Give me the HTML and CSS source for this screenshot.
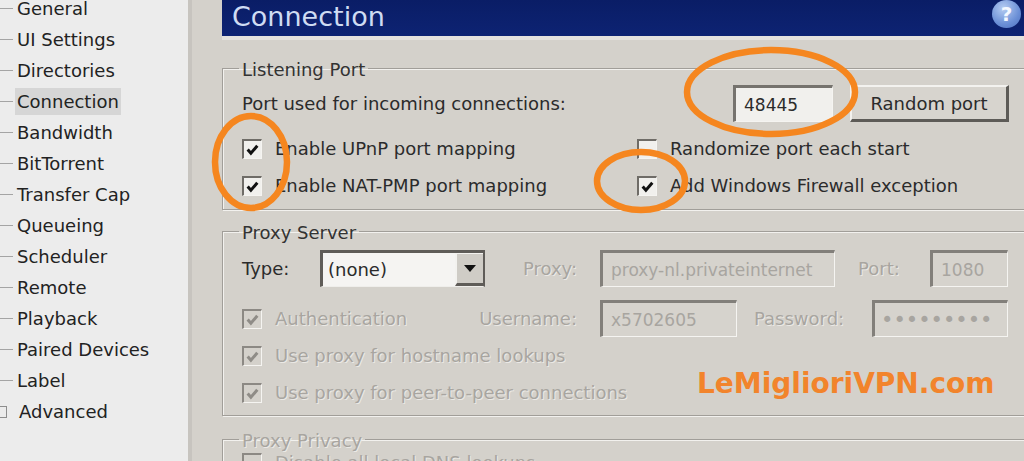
FILE: index.html
```html
<!DOCTYPE html>
<html lang="en">
<head>
<meta charset="utf-8">
<title>Preferences - Connection</title>
<link rel="stylesheet" href="styles.css">
</head>
<body>
<div class="app">
  <nav class="sidebar">
    <ul class="tree">
      <li><span class="item">General</span></li>
      <li><span class="item">UI Settings</span></li>
      <li><span class="item">Directories</span></li>
      <li class="selected"><span class="item">Connection</span></li>
      <li><span class="item">Bandwidth</span></li>
      <li><span class="item">BitTorrent</span></li>
      <li><span class="item">Transfer Cap</span></li>
      <li><span class="item">Queueing</span></li>
      <li><span class="item">Scheduler</span></li>
      <li><span class="item">Remote</span></li>
      <li><span class="item">Playback</span></li>
      <li><span class="item">Paired Devices</span></li>
      <li><span class="item">Label</span></li>
      <li class="expandable"><span class="item">Advanced</span></li>
    </ul>
  </nav>
  <main class="panel">
    <header class="title-bar">
      <h1 class="title">Connection</h1>
      <span class="help">?</span>
    </header>

    <fieldset class="group listening">
      <legend>Listening Port</legend>
      <div class="port-row">
        <span class="port-label">Port used for incoming connections:</span>
        <span class="field port-field">48445</span>
        <span class="button">Random port</span>
      </div>
      <div class="check-grid">
        <div class="check"><span class="box checked"><svg viewBox="0 0 14 14"><polyline points="2.5,7 5.5,10.5 11.5,3.5"/></svg></span>Enable UPnP port mapping</div>
        <div class="check"><span class="box"></span>Randomize port each start</div>
        <div class="check"><span class="box checked"><svg viewBox="0 0 14 14"><polyline points="2.5,7 5.5,10.5 11.5,3.5"/></svg></span>Enable NAT-PMP port mapping</div>
        <div class="check"><span class="box checked"><svg viewBox="0 0 14 14"><polyline points="2.5,7 5.5,10.5 11.5,3.5"/></svg></span>Add Windows Firewall exception</div>
      </div>
    </fieldset>

    <fieldset class="group proxy">
      <legend>Proxy Server</legend>
      <div class="proxy-row first">
        <span class="type-label">Type:</span>
        <span class="select"><span class="select-value">(none)</span><span class="select-arrow"></span></span>
        <span class="dim-label right proxy-label">Proxy:</span>
        <span class="field disabled host-field">proxy-nl.privateinternet</span>
        <span class="dim-label port-label2">Port:</span>
        <span class="field disabled small-port">1080</span>
      </div>
      <div class="proxy-row">
        <div class="check dim auth"><span class="box checked disabled"><svg viewBox="0 0 14 14"><polyline points="2.5,7 5.5,10.5 11.5,3.5"/></svg></span>Authentication</div>
        <span class="dim-label right user-label">Username:</span>
        <span class="field disabled user-field">x5702605</span>
        <span class="dim-label pass-label">Password:</span>
        <span class="field disabled pass-field">•••••••••</span>
      </div>
      <div class="proxy-row">
        <div class="check dim"><span class="box checked disabled"><svg viewBox="0 0 14 14"><polyline points="2.5,7 5.5,10.5 11.5,3.5"/></svg></span>Use proxy for hostname lookups</div>
      </div>
      <div class="proxy-row">
        <div class="check dim"><span class="box checked disabled"><svg viewBox="0 0 14 14"><polyline points="2.5,7 5.5,10.5 11.5,3.5"/></svg></span>Use proxy for peer-to-peer connections</div>
      </div>
    </fieldset>

    <fieldset class="group privacy">
      <legend class="dim">Proxy Privacy</legend>
      <div class="proxy-row privacy-row">
        <div class="check dim"><span class="box disabled"></span>Disable all local DNS lookups</div>
      </div>
    </fieldset>
  </main>
</div>

<svg class="annotations" viewBox="0 0 1024 461" width="1024" height="461">
  <ellipse cx="771" cy="92" rx="84" ry="42"/>
  <ellipse cx="251" cy="162" rx="36" ry="46"/>
  <ellipse cx="641" cy="181" rx="44" ry="29"/>
</svg>
<div class="watermark">LeMiglioriVPN.com</div>
</body>
</html>
```

FILE: styles.css
```css
* { box-sizing: border-box; }

html, body {
  margin: 0;
  padding: 0;
  width: 1024px;
  height: 461px;
  overflow: hidden;
  font-family: "DejaVu Sans", "Liberation Sans", sans-serif;
  font-size: 18px;
  color: #2b2b2b;
  background: #d4d1cb;
}

body { position: relative; }

.app {
  display: flex;
  width: 1024px;
  height: 461px;
}

/* ---------- sidebar tree ---------- */
.sidebar {
  width: 188px;
  flex: none;
  background: #ececec;
  overflow: hidden;
}

.tree {
  list-style: none;
  margin: -7px 0 0 0;
  padding: 0;
}

.tree li {
  display: flex;
  align-items: center;
  height: 31px;
  white-space: nowrap;
}

.tree li::before {
  content: "";
  flex: none;
  width: 13px;
  height: 1px;
  background: #a4a4a4;
  margin-right: 4px;
}

.tree li.expandable::before {
  width: 10px;
  height: 10px;
  margin-left: -5px;
  margin-right: 12px;
  background: transparent;
  border: 1px solid #8e8e8e;
}

.item {
  color: #222;
  padding: 3px 2px;
  margin-left: -2px;
}

.selected .item {
  background: #d6d6d6;
}

/* ---------- panel ---------- */
.panel {
  flex: 1;
  border-left: 4px solid #c7c4bf;
  overflow: hidden;
  background: #d4d1cb;
}

.title-bar {
  display: flex;
  align-items: center;
  justify-content: space-between;
  height: 36px;
  margin-left: 30px;
  padding: 0 3px 0 10px;
  background: linear-gradient(#0a1d66, #0d2373);
  border-bottom: 4px solid #e4e2de;
  box-sizing: content-box;
}

.title {
  margin: 0 0 3px 0;
  font-size: 27px;
  font-weight: normal;
  line-height: 33px;
  color: #cfdcf3;
}

.help {
  width: 29px;
  height: 28px;
  margin-top: -9px;
  border-radius: 50%;
  background: radial-gradient(circle at 40% 30%, #b6cdf2, #6b8fd6 60%, #4d70bf);
  color: #f4f8ff;
  font-weight: bold;
  font-size: 20px;
  line-height: 28px;
  text-align: center;
}

/* ---------- group boxes ---------- */
.group {
  margin: 17px -40px 0 30px;
  padding: 0 0 5px 19px;
  border: 1px solid #a19e99;
  box-shadow: inset 1px 1px 0 #f2f1ee, 1px 1px 0 #f2f1ee;
  min-width: 0;
}

.group legend {
  margin-left: -3px;
  padding: 3px 3px 0 3px;
  line-height: 19px;
  color: #333;
}

.proxy { margin-top: 10px; padding-bottom: 4px; }
.privacy { margin-top: 12px; }

.dim, .group legend.dim { color: #a8a5a0; text-shadow: 1px 1px 0 #ebe9e5; }

/* ---------- listening port ---------- */
.port-row {
  display: flex;
  align-items: center;
  height: 37px;
  margin-top: 6px;
}

.port-label { width: 491px; flex: none; }

.field {
  display: flex;
  align-items: center;
  height: 37px;
  padding: 0 8px;
  flex: none;
  background: #f1f0ed;
  border-top: 3px solid #76736e;
  border-left: 3px solid #76736e;
  border-right: 1px solid #f5f4f1;
  border-bottom: 1px solid #f5f4f1;
  font-size: 17px;
  white-space: nowrap;
  overflow: hidden;
  color: #2b2b2b;
}

.port-field { width: 100px; }

.button {
  width: 159px;
  height: 37px;
  margin-left: 17px;
  flex: none;
  display: flex;
  align-items: center;
  justify-content: center;
  background: #d7d4ce;
  border-top: 2px solid #f3f2ef;
  border-left: 2px solid #f3f2ef;
  border-right: 3px solid #5d5b57;
  border-bottom: 3px solid #5d5b57;
  color: #2b2b2b;
}

.check-grid {
  display: grid;
  grid-template-columns: 395px auto;
  grid-auto-rows: 37px;
  margin-top: 8px;
}

.check {
  display: flex;
  align-items: center;
  white-space: nowrap;
}

.box {
  width: 20px;
  height: 20px;
  flex: none;
  margin-right: 13px;
  background: #f1f0ed;
  border-top: 2px solid #6f6c67;
  border-left: 2px solid #6f6c67;
  border-right: 1px solid #f5f4f1;
  border-bottom: 1px solid #f5f4f1;
  display: flex;
  align-items: center;
  justify-content: center;
}

.box svg {
  width: 15px;
  height: 15px;
  fill: none;
  stroke: #111;
  stroke-width: 2.8;
}

.box.disabled {
  background: #d4d1cb;
  border-top-color: #8c8984;
  border-left-color: #8c8984;
}

.box.disabled svg { stroke: #8f8c87; }

/* ---------- proxy server ---------- */
.proxy-row {
  display: flex;
  align-items: center;
  height: 37px;
  white-space: nowrap;
}

.proxy-row.first { margin-top: 8px; margin-bottom: 13px; }

.type-label { width: 78px; flex: none; }

.select {
  width: 165px;
  height: 37px;
  flex: none;
  display: flex;
  background: #f5f4f2;
  border-top: 3px solid #5f5c58;
  border-left: 3px solid #5f5c58;
  border-right: 2px solid #5f5c58;
  border-bottom: 1px solid #efeeeb;
}

.select-value {
  flex: 1;
  padding-left: 5px;
  line-height: 33px;
}

.select-arrow {
  width: 28px;
  flex: none;
  background: #cfccc6;
  border-left: 2px solid #f3f2ef;
  border-top: 1px solid #f3f2ef;
  border-bottom: 3px solid #5f5c58;
  display: flex;
  align-items: center;
  justify-content: center;
}

.select-arrow::after {
  content: "";
  border-left: 6px solid transparent;
  border-right: 6px solid transparent;
  border-top: 7px solid #111;
}

.dim-label { color: #a8a5a0; text-shadow: 1px 1px 0 #ebe9e5; flex: none; }
.right { text-align: right; padding-right: 23px; }

.proxy-label { width: 115px; }
.port-label2 { width: 95px; padding-left: 23px; }
.user-label { width: 125px; }
.pass-label { width: 135px; padding-left: 17px; }

.field.disabled {
  background: #d6d3cd;
  color: #a8a5a0;
  border-top-color: #827f7a;
  border-left-color: #827f7a;
}

.host-field { width: 235px; }
.small-port { width: 78px; }
.user-field { width: 137px; }
.pass-field { width: 136px; color: #8d8a85; font-size: 21px; letter-spacing: 0; padding-left: 6px; }

.auth { width: 233px; flex: none; }

.privacy-row { margin-top: -6px; }

/* ---------- overlays ---------- */
.annotations {
  position: absolute;
  left: 0;
  top: 0;
  pointer-events: none;
}

.annotations ellipse {
  fill: none;
  stroke: #f5861f;
  stroke-width: 6.5;
}

.watermark {
  position: absolute;
  left: 697px;
  top: 367px;
  font-family: "DejaVu Sans", sans-serif;
  font-weight: bold;
  font-size: 28px;
  color: #f2842c;
  white-space: nowrap;
}
```
